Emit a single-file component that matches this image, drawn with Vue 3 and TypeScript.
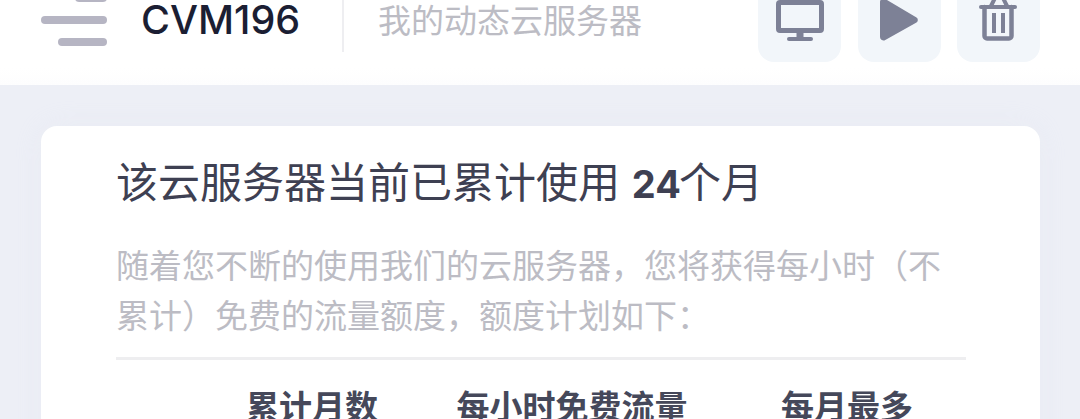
<script setup lang="ts">
const headers = ['累计月数', '每小时免费流量', '每月最多'];
</script>

<template>
  <div class="page">
    <header class="top">
      <div class="menu">
        <span class="bar short"></span>
        <span class="bar long"></span>
        <span class="bar mid"></span>
      </div>
      <div class="name">CVM196</div>
      <div class="sub">我的动态云服务器</div>
      <div class="actions">
        <button class="act">
          <svg width="48" height="48" viewBox="0 0 48 48" fill="none" stroke="#7d8196" stroke-width="5" stroke-linejoin="round" stroke-linecap="round">
            <rect x="2.5" y="9.5" width="43" height="28" rx="1.5" />
            <path d="M24 38v8" stroke-linecap="butt" stroke-width="7" />
            <path d="M13 46h22" stroke-width="4" />
          </svg>
        </button>
        <button class="act">
          <svg width="48" height="48" viewBox="0 0 48 48">
            <path d="M5 9v35a3.5 3.5 0 0 0 5.3 3L41.5 29.5a3 3 0 0 0 0-5L10.3 6A3.5 3.5 0 0 0 5 9z" fill="#7d8196" />
          </svg>
        </button>
        <button class="act">
          <svg width="48" height="48" viewBox="0 0 48 48" fill="none" stroke="#7d8196" stroke-width="4.5" stroke-linejoin="round" stroke-linecap="round">
            <path d="M6 14h34" stroke-width="4" />
            <path d="M16 13l4-8h8l4 8" stroke-width="4" />
            <path d="M9.5 14v29a2.5 2.5 0 0 0 2.5 2.5h22a2.5 2.5 0 0 0 2.5-2.5V14" />
            <path d="M19 20v20M28 20v20" stroke-width="4" stroke-linecap="butt" />
          </svg>
        </button>
      </div>
    </header>
    <main class="body">
      <section class="card">
        <h1 class="title">该云服务器当前已累计使用 <b>24</b>个月</h1>
        <p class="desc">随着您不断的使用我们的云服务器，您将获得每小时（不累计）免费的流量额度，额度计划如下：</p>
        <div class="head-row">
          <div v-for="h in headers" :key="h" class="cell">{{ h }}</div>
        </div>
      </section>
    </main>
  </div>
</template>

<style>
html,
body {
  margin: 0;
  overflow: hidden;
}
</style>

<style scoped>
.page {
  width: 1080px;
  height: 419px;
  overflow: hidden;
  background: #edeff6;
  font-family: Inter, "Noto Sans CJK SC", sans-serif;
}

.top {
  display: flex;
  align-items: flex-start;
  height: 85px;
  padding: 0 40px 0 41px;
  box-sizing: border-box;
  background: linear-gradient(#fff 80%, #fdfdfe);
}

.menu {
  display: flex;
  flex-direction: column;
  align-items: flex-end;
  gap: 14px;
  width: 66px;
  margin-top: -6px;
}

.bar {
  height: 8px;
  border-radius: 4px;
  background: #b6b5c3;
}

.bar.short {
  width: 32px;
}

.bar.long {
  width: 66px;
}

.bar.mid {
  width: 49px;
}

.name {
  width: 203px;
  height: 52px;
  margin-left: 34px;
  border-right: 2px solid #eeeef1;
  box-sizing: border-box;
  font-size: 39.5px;
  font-weight: 500;
  line-height: 41px;
  color: #1b1e33;
}

.sub {
  margin-left: 34px;
  font-size: 33px;
  line-height: 42px;
  color: #bcbcc4;
}

.actions {
  display: flex;
  gap: 16.5px;
  margin-left: auto;
  margin-top: -21px;
}

.act {
  display: flex;
  justify-content: center;
  align-items: flex-end;
  width: 83px;
  height: 83px;
  padding: 0 0 21px;
  border: 0;
  border-radius: 16px;
  background: #f2f6fa;
}

.body {
  padding: 41px 40px 0 41px;
}

.card {
  height: 320px;
  padding: 34px 74px 0 75px;
  border-radius: 16px;
  background: #fff;
  box-shadow: 0 0 30px rgba(220, 224, 240, 0.2);
}

.title {
  margin: 0;
  font-size: 42px;
  font-weight: 400;
  line-height: 46px;
  color: #3e4052;
}

.title b {
  margin-right: -2px;
  font-size: 38px;
  font-weight: 700;
}

.desc {
  margin: 34px 0 0;
  padding-bottom: 16px;
  border-bottom: 3px solid #eeeef0;
  font-size: 33px;
  line-height: 50px;
  color: #bcbcc4;
}

.head-row {
  display: grid;
  grid-template-columns: 208px 312px 238px;
  padding: 23px 0 0 92px;
}

.cell {
  font-size: 33px;
  font-weight: 700;
  line-height: 48px;
  text-align: center;
  white-space: nowrap;
  color: #45485a;
}
</style>
